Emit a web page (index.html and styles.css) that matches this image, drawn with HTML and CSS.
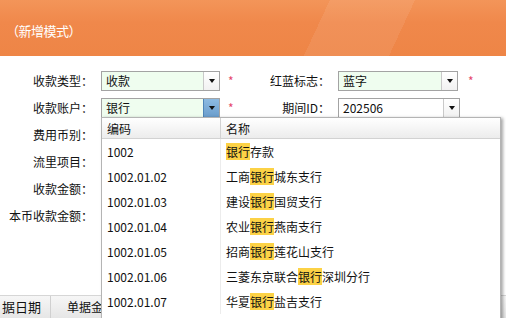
FILE: index.html
```html
<!DOCTYPE html>
<html lang="zh-CN">
<head>
<meta charset="UTF-8" />
<title>收款单</title>
<link rel="stylesheet" href="styles.css">
</head>
<body>
<div class="page">
  <div class="banner">
    <span class="mode">（新增模式）</span>
  </div>

  <div class="form">
    <label class="lbl">收款类型：</label>
    <div class="combo filled"><span class="val">收款</span><span class="btn"><i class="tri"></i></span></div>
    <span class="star">*</span>
    <label class="lbl">红蓝标志：</label>
    <div class="combo filled narrow"><span class="val">蓝字</span><span class="btn"><i class="tri"></i></span></div>
    <span class="star">*</span>

    <label class="lbl">收款账户：</label>
    <div class="combo filled"><span class="val">银行</span><span class="btn active"><i class="tri"></i></span></div>
    <span class="star">*</span>
    <label class="lbl">期间ID：</label>
    <div class="combo"><span class="val">202506</span><span class="btn"><i class="tri"></i></span></div>
    <span></span>

    <label class="lbl">费用币别：</label>
    <span></span><span></span><span></span><span></span><span></span>
    <label class="lbl">流里项目：</label>
    <span></span><span></span><span></span><span></span><span></span>
    <label class="lbl">收款金额：</label>
    <span></span><span></span><span></span><span></span><span></span>
    <label class="lbl">本币收款金额：</label>
  </div>

  <div class="grid-head">
    <div class="gh-cell first">据日期</div>
    <div class="gh-cell">单据金</div>
  </div>

  <div class="dropdown">
    <div class="dd-row dd-head">
      <div class="dd-code">编码</div>
      <div class="dd-name">名称</div>
    </div>
    <div class="dd-row"><div class="dd-code">1002</div><div class="dd-name"><mark>银行</mark>存款</div></div>
    <div class="dd-row"><div class="dd-code">1002.01.02</div><div class="dd-name">工商<mark>银行</mark>城东支行</div></div>
    <div class="dd-row"><div class="dd-code">1002.01.03</div><div class="dd-name">建设<mark>银行</mark>国贸支行</div></div>
    <div class="dd-row"><div class="dd-code">1002.01.04</div><div class="dd-name">农业<mark>银行</mark>燕南支行</div></div>
    <div class="dd-row"><div class="dd-code">1002.01.05</div><div class="dd-name">招商<mark>银行</mark>莲花山支行</div></div>
    <div class="dd-row"><div class="dd-code">1002.01.06</div><div class="dd-name">三菱东京联合<mark>银行</mark>深圳分行</div></div>
    <div class="dd-row"><div class="dd-code">1002.01.07</div><div class="dd-name">华夏<mark>银行</mark>盐吉支行</div></div>
  </div>
</div>
</body>
</html>
```

FILE: styles.css
```css
body {
  margin: 0;
  font-family: "Noto Sans CJK SC", "Liberation Sans", sans-serif;
  font-size: 12px;
  color: #111;
  background: #fff;
}

.page {
  position: relative;
  width: 506px;
  height: 318px;
  overflow: hidden;
  display: flex;
  flex-direction: column;
}

.banner {
  height: 56px;
  flex: none;
  display: flex;
  align-items: center;
  padding-left: 6px;
  background:
    linear-gradient(115deg, transparent 62%, rgba(255, 255, 255, 0.08) 62%, rgba(255, 255, 255, 0.08) 78%, transparent 78%),
    linear-gradient(180deg, #f39559 0%, #f0884b 40%, #ee8546 100%);
}

.mode {
  color: #fff;
  font-size: 13px;
  letter-spacing: -0.5px;
  margin-top: 4px;
}

.form {
  display: grid;
  grid-template-columns: 93px 119px 16px 78px 122px 16px;
  grid-auto-rows: 20px;
  column-gap: 8px;
  row-gap: 7px;
  padding-top: 15px;
  align-items: center;
}

.lbl {
  text-align: right;
  white-space: nowrap;
  line-height: 20px;
}

.combo {
  height: 20px;
  box-sizing: border-box;
  border: 1px solid #a3a3a3;
  background: #fff;
  display: flex;
  align-items: stretch;
}

.combo.filled {
  background: #effdef;
}

.combo.narrow {
  width: 120px;
}

.val {
  flex: 1;
  padding-left: 4px;
  line-height: 18px;
}

.btn {
  width: 15px;
  border-left: 1px solid #c9c9c9;
  background: linear-gradient(#ffffff, #f1f1f1);
  display: flex;
  align-items: center;
  justify-content: center;
}

.btn.active {
  border-left-color: #4f86b8;
  background: linear-gradient(#8dbbe2, #6a9dcc);
}

.tri {
  width: 0;
  height: 0;
  border-left: 3.5px solid transparent;
  border-right: 3.5px solid transparent;
  border-top: 4px solid #111;
}

.star {
  color: #e5476d;
  font-size: 12px;
  line-height: 20px;
}

.grid-head {
  margin-top: auto;
  height: 22px;
  flex: none;
  display: flex;
  border-top: 1px solid #d6d6d6;
  background: linear-gradient(#f6f6f6, #e6e6e6);
}

.gh-cell {
  line-height: 22px;
  white-space: nowrap;
  overflow: hidden;
  border-right: 1px solid #d0d0d0;
  width: 34px;
  padding-left: 16px;
}

.gh-cell.first {
  width: 48px;
  padding-left: 2px;
  font-size: 13px;
}

.dropdown {
  position: absolute;
  left: 101px;
  top: 117px;
  width: 398px;
  height: 220px;
  background: #fff;
  border: 1px solid #b4b4b4;
  box-shadow: 2px 1px 3px rgba(0, 0, 0, 0.35);
}

.dd-row {
  display: grid;
  grid-template-columns: 119px 1fr;
  height: 25px;
  align-items: center;
}

.dd-head {
  height: 20px;
  border-bottom: 1px solid #d2d2d2;
  background: linear-gradient(#ffffff, #ececec);
}

.dd-code,
.dd-name {
  height: 100%;
  display: flex;
  align-items: center;
  padding-left: 5px;
  white-space: nowrap;
}

.dd-code {
  border-right: 1px solid #ececec;
}

.dd-head .dd-code {
  border-right-color: #d2d2d2;
}

mark {
  background: #fcd246;
  color: inherit;
  line-height: 17px;
}
```
